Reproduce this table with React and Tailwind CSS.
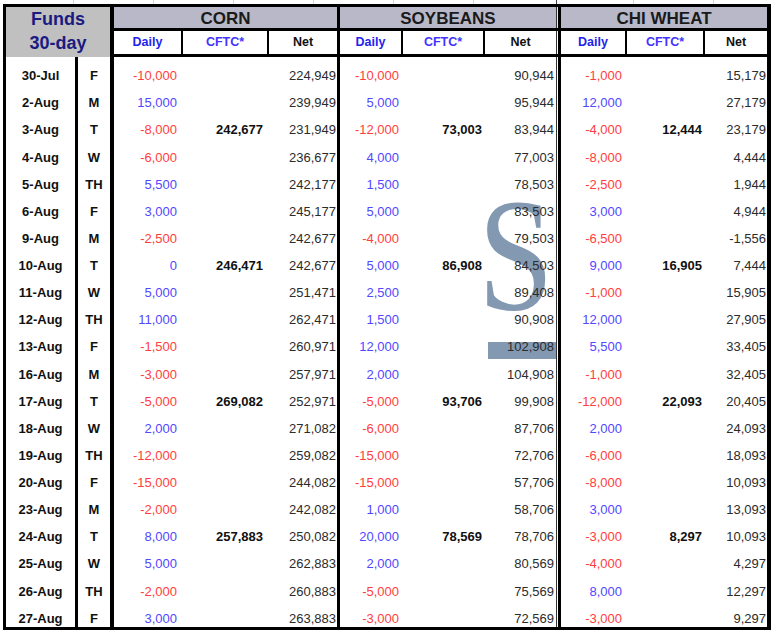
import React from "react";

const rows = [
  ["30-Jul", "F", "-10,000", "", "224,949", "-10,000", "", "90,944", "-1,000", "", "15,179"],
  ["2-Aug", "M", "15,000", "", "239,949", "5,000", "", "95,944", "12,000", "", "27,179"],
  ["3-Aug", "T", "-8,000", "242,677", "231,949", "-12,000", "73,003", "83,944", "-4,000", "12,444", "23,179"],
  ["4-Aug", "W", "-6,000", "", "236,677", "4,000", "", "77,003", "-8,000", "", "4,444"],
  ["5-Aug", "TH", "5,500", "", "242,177", "1,500", "", "78,503", "-2,500", "", "1,944"],
  ["6-Aug", "F", "3,000", "", "245,177", "5,000", "", "83,503", "3,000", "", "4,944"],
  ["9-Aug", "M", "-2,500", "", "242,677", "-4,000", "", "79,503", "-6,500", "", "-1,556"],
  ["10-Aug", "T", "0", "246,471", "242,677", "5,000", "86,908", "84,503", "9,000", "16,905", "7,444"],
  ["11-Aug", "W", "5,000", "", "251,471", "2,500", "", "89,408", "-1,000", "", "15,905"],
  ["12-Aug", "TH", "11,000", "", "262,471", "1,500", "", "90,908", "12,000", "", "27,905"],
  ["13-Aug", "F", "-1,500", "", "260,971", "12,000", "", "102,908", "5,500", "", "33,405"],
  ["16-Aug", "M", "-3,000", "", "257,971", "2,000", "", "104,908", "-1,000", "", "32,405"],
  ["17-Aug", "T", "-5,000", "269,082", "252,971", "-5,000", "93,706", "99,908", "-12,000", "22,093", "20,405"],
  ["18-Aug", "W", "2,000", "", "271,082", "-6,000", "", "87,706", "2,000", "", "24,093"],
  ["19-Aug", "TH", "-12,000", "", "259,082", "-15,000", "", "72,706", "-6,000", "", "18,093"],
  ["20-Aug", "F", "-15,000", "", "244,082", "-15,000", "", "57,706", "-8,000", "", "10,093"],
  ["23-Aug", "M", "-2,000", "", "242,082", "1,000", "", "58,706", "3,000", "", "13,093"],
  ["24-Aug", "T", "8,000", "257,883", "250,082", "20,000", "78,569", "78,706", "-3,000", "8,297", "10,093"],
  ["25-Aug", "W", "5,000", "", "262,883", "2,000", "", "80,569", "-4,000", "", "4,297"],
  ["26-Aug", "TH", "-2,000", "", "260,883", "-5,000", "", "75,569", "8,000", "", "12,297"],
  ["27-Aug", "F", "3,000", "", "263,883", "-3,000", "", "72,569", "-3,000", "", "9,297"],
];

const dailyColor = (v) => (v.startsWith("-") ? "text-[#ff3d3d]" : "text-[#5148ff]");

const Daily = ({ v, className }) => (
  <div className={`flex items-end justify-end pb-[1px] ${className} ${dailyColor(v)}`}>{v}</div>
);

const Cftc = ({ v, className }) => (
  <div className={`flex items-end justify-end pb-[1px] font-bold text-[#111] ${className}`}>{v}</div>
);

const Net = ({ v, className }) => (
  <div className={`flex items-end justify-end pb-[1px] text-[#2b2b2b] ${className}`}>{v}</div>
);

const SubHead = ({ className }) => (
  <>
    <div className={`flex items-end justify-center pb-[2px] text-[#2323ee] border-r-2 border-black ${className[0]}`}>Daily</div>
    <div className={`flex items-end justify-center pb-[2px] text-[#4433ff] border-r-2 border-black ${className[1]}`}>CFTC*</div>
    <div className={`flex items-end justify-center pb-[2px] text-[#111] ${className[2]}`}>Net</div>
  </>
);

const Band = ({ label }) => (
  <div className="h-[24px] bg-[#b8b8c8] border-b-[3px] border-black flex items-center justify-center text-[17px] font-bold text-[#1a1a1a] leading-none pt-[1px]">
    {label}
  </div>
);

export default function App() {
  return (
    <div className="relative w-[774px] h-[632px] bg-white overflow-hidden font-['Liberation_Sans',Arial,sans-serif]">
      {/* watermark */}
      <div className="absolute left-[478px] top-[175px] text-[160px] leading-none text-[#64809e] opacity-80 font-['Liberation_Serif',serif] scale-x-[0.85] origin-left select-none">
        S
      </div>
      <div className="absolute left-[488px] top-[342px] w-[68px] h-[17px] bg-[#64809e] opacity-80" />

      {/* sheet gridline strip */}
      <div className="flex h-[4px]">
        <div className="w-[73px]" />
        <div className="w-[80px] border-l border-[#d8d8d8]" />
        <div className="w-[80px] border-l border-[#d8d8d8]" />
        <div className="w-[80px] border-l border-[#d8d8d8]" />
        <div className="w-[80px] border-l border-[#d8d8d8]" />
        <div className="w-[80px] border-l border-[#d8d8d8]" />
        <div className="w-[83px] border-l border-[#d8d8d8]" />
        <div className="w-[77px] border-l border-[#444]" />
        <div className="w-[80px] border-l border-[#d8d8d8]" />
        <div className="w-[60px] border-l border-[#d8d8d8]" />
      </div>

      <div className="relative ml-[3px] w-[768px] border-t-[3px] border-l-[3px] border-r-[4px] border-b-[3px] border-black">
        {/* header */}
        <div className="flex h-[50px] text-[12.5px] font-bold">
          <div className="w-[108px] border-r-[4px] border-black bg-[#c0c0c0] flex flex-col items-center text-[18px] leading-[24px] text-[#1a1a80]">
            <div>Funds</div>
            <div>30-day</div>
          </div>
          <div className="w-[226px] border-r-[3px] border-black flex flex-col">
            <Band label="CORN" />
            <div className="flex h-[26px] border-b-[3px] border-black">
              <SubHead className={["w-[69px]", "w-[86px]", "w-[68px]"]} />
            </div>
          </div>
          <div className="w-[221px] border-r-[3px] border-black flex flex-col">
            <div className="flex">
              <div className="w-[216px]">
                <Band label="SOYBEANS" />
              </div>
              <div className="w-[1px] bg-[#333] border-b-[3px] border-black" />
              <div className="w-[1px] h-[24px] bg-[#e8e8e8] border-b-[3px] border-black" />
            </div>
            <div className="flex h-[26px] border-b-[3px] border-black">
              <SubHead className={["w-[63px]", "w-[82px]", "w-[71px]"]} />
              <div className="w-[1px] bg-[#333]" />
              <div className="w-[1px]" />
            </div>
          </div>
          <div className="w-[206px] flex flex-col">
            <Band label="CHI WHEAT" />
            <div className="flex h-[26px] border-b-[3px] border-black">
              <SubHead className={["w-[66px]", "w-[78px]", "w-[62px]"]} />
            </div>
          </div>
        </div>

        {/* body */}
        <div className="text-[13px] leading-[15px]">
          {rows.map((r) => (
            <div key={r[0]} className="flex h-[27.14px]">
              <div className="w-[72px] border-r-[3px] border-black flex items-end justify-center pb-[1px] font-bold text-[#111]">{r[0]}</div>
              <div className="w-[36px] border-r-[4px] border-black flex items-end justify-center pb-[1px] font-bold text-[#111]">{r[1]}</div>
              <div className="w-[226px] border-r-[3px] border-black flex">
                <Daily v={r[2]} className="w-[69px] pr-[6px]" />
                <Cftc v={r[3]} className="w-[86px] pr-[6px]" />
                <Net v={r[4]} className="w-[68px] pr-[1px]" />
              </div>
              <div className="w-[221px] border-r-[3px] border-black flex">
                <Daily v={r[5]} className="w-[63px] pr-[4px]" />
                <Cftc v={r[6]} className="w-[82px] pr-[3px]" />
                <Net v={r[7]} className="w-[71px] pr-[2px]" />
                <div className="w-[1px] bg-[#333]" />
                <div className="w-[1px]" />
              </div>
              <div className="w-[206px] flex">
                <Daily v={r[8]} className="w-[66px] pr-[5px]" />
                <Cftc v={r[9]} className="w-[78px] pr-[3px]" />
                <Net v={r[10]} className="w-[62px] pr-[1px]" />
              </div>
            </div>
          ))}
        </div>
      </div>
    </div>
  );
}
